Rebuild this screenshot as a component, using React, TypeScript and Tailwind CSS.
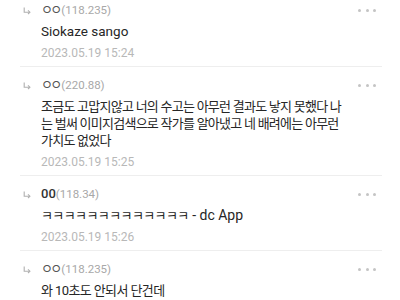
import React from "react";

type Comment = {
  name: string;
  ip: string;
  lines: React.ReactNode;
  date: string;
  nameDigits?: boolean;
  en?: boolean;
};

const comments: Comment[] = [
  {
    name: "ㅇㅇ",
    ip: "(118.235)",
    en: true,
    lines: "Siokaze sango",
    date: "2023.05.19 15:24",
  },
  {
    name: "ㅇㅇ",
    ip: "(220.88)",
    lines: (
      <div className="tracking-[-0.75px]">
        <span className="block whitespace-nowrap">조금도 고맙지않고 너의 수고는 아무런 결과도 낳지 못했다 나</span>
        <span className="block whitespace-nowrap">는 벌써 이미지검색으로 작가를 알아냈고 네 배려에는 아무런</span>
        <span className="block whitespace-nowrap">가치도 없었다</span>
      </div>
    ),
    date: "2023.05.19 15:25",
  },
  {
    name: "00",
    ip: "(118.34)",
    nameDigits: true,
    lines: (
      <>
        ㅋㅋㅋㅋㅋㅋㅋㅋㅋㅋㅋㅋㅋ<span className="tracking-normal text-[14px]"> - dc App</span>
      </>
    ),
    date: "2023.05.19 15:26",
  },
  {
    name: "ㅇㅇ",
    ip: "(118.235)",
    lines: "와 10초도 안되서 단건데",
    date: "2023.05.19 15:27",
  },
];

const ReplyArrow = () => (
  <svg width="8" height="8" viewBox="0 0 8 8" fill="none" className="mt-[1px]">
    <path d="M1.2 0.5V5.2H6.8" stroke="#b0b0b0" strokeWidth="1.1" />
    <path d="M5 3.4L6.9 5.2L5 7" stroke="#b0b0b0" strokeWidth="1.1" />
  </svg>
);

const Dots = () => (
  <div className="flex gap-[4.5px] pr-[6px]">
    <span className="w-[3px] h-[3px] rounded-full bg-[#c4c4c4]" />
    <span className="w-[3px] h-[3px] rounded-full bg-[#c4c4c4]" />
    <span className="w-[3px] h-[3px] rounded-full bg-[#c4c4c4]" />
  </div>
);

const CommentRow = ({ c, first }: { c: Comment; first?: boolean }) => (
  <div className={`ml-[20px] mr-[18px] border-b border-[#eeeeee] pt-[10px] pb-[5px] ${first ? "-mt-[8px]" : ""}`}>
    <div className="flex items-center h-[16px]">
      <div className="w-[21px] pl-[3px] flex items-center">
        <ReplyArrow />
      </div>
      <div className="flex-1 flex items-center text-[12px] leading-[16px]">
        {c.nameDigits ? (
          <span className="text-[#333333] text-[13px] font-medium">{c.name}</span>
        ) : (
          <span className="text-[#555555] text-[13px] tracking-[-2.8px] pr-[2px]">{c.name}</span>
        )}
        <span className="text-[#a8a8a8] text-[11.5px]">{c.ip}</span>
      </div>
      <Dots />
    </div>
    <div
      className={`pl-[21px] pr-[4px] mt-[5px] leading-[17px] text-[#262626] ${
        c.en ? "text-[13.5px]" : "text-[13px] tracking-[-0.6px]"
      }`}
    >
      {c.lines}
    </div>
    <div className="pl-[21px] mt-[5px] text-[12px] leading-[16px] text-[#b8b8b8]">{c.date}</div>
  </div>
);

export default function App() {
  return (
    <div className="w-[400px] h-[300px] overflow-hidden bg-white font-['Roboto','Noto_Sans_CJK_KR',sans-serif]">
      {comments.map((c, i) => (
        <CommentRow key={i} c={c} first={i === 0} />
      ))}
    </div>
  );
}
